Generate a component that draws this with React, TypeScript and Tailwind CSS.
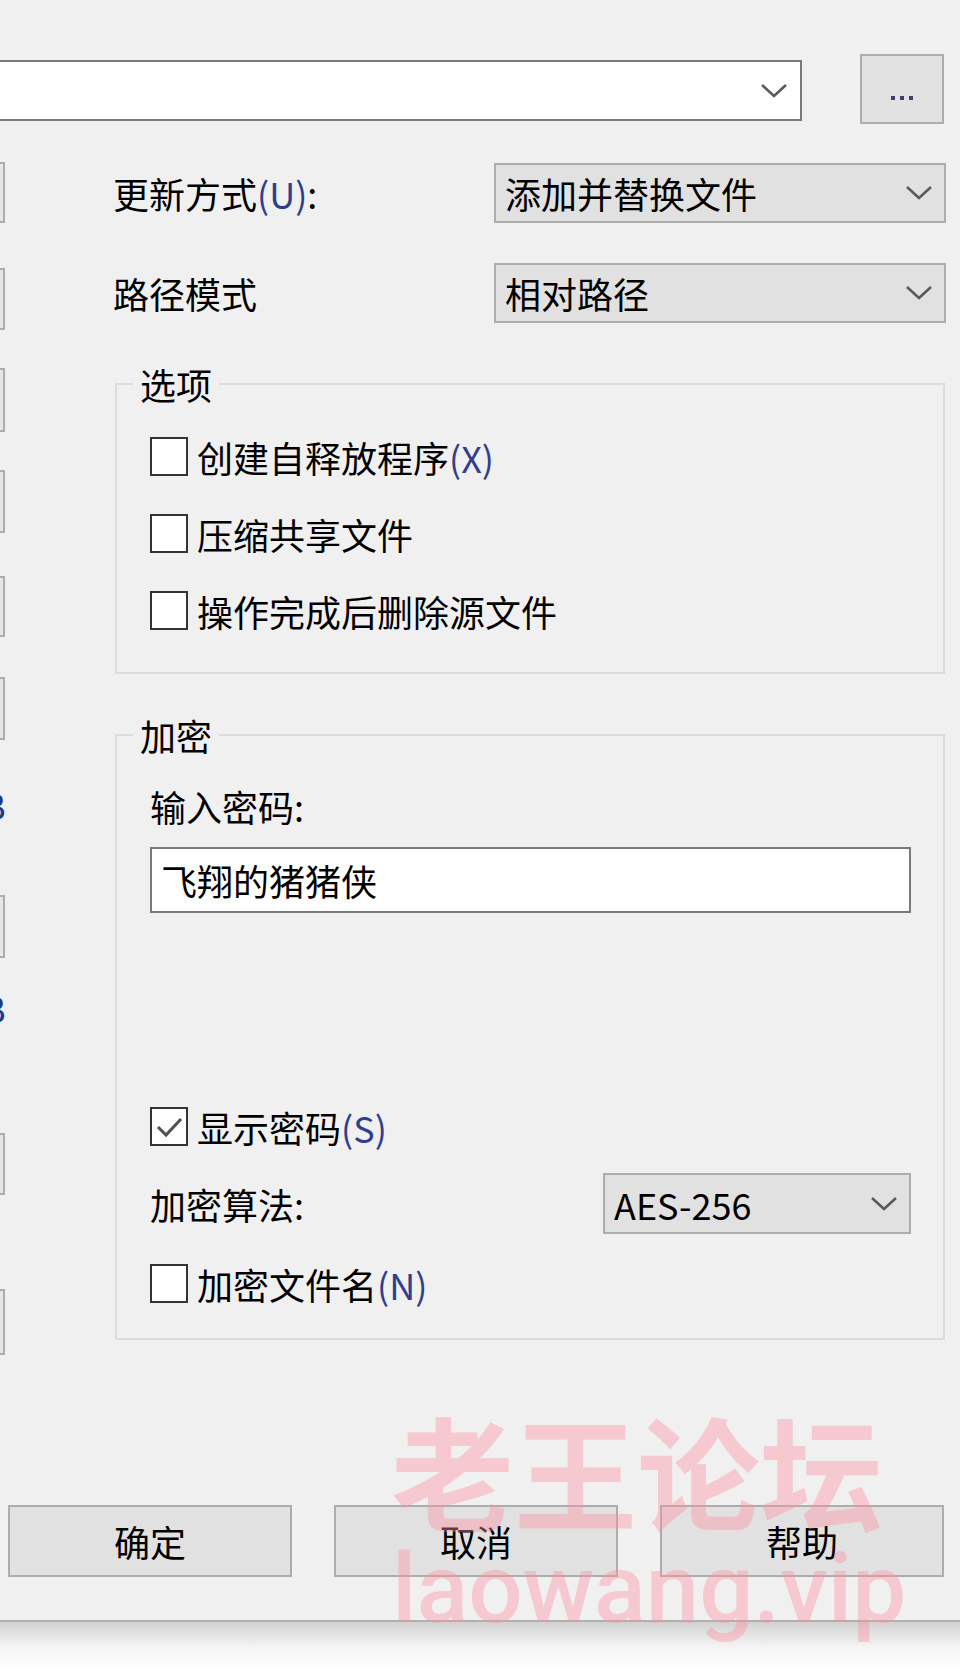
import type { ReactNode } from 'react';

const cjk = "font-['Noto_Sans_CJK_SC','Noto_Sans',sans-serif]";

const Chevron = () => (
    <svg width="28" height="16" viewBox="0 0 28 16" className="shrink-0">
        <polyline points="2,2 14,13 26,2" fill="none" stroke="#5a5a5a" strokeWidth="2.6"/>
    </svg>
);

const Key = ({ k }: { k: string }) => (
    <span className="text-[#2f3f8c]">({k})</span>
);

const Dropdown = ({ text, width, height }: { text: string; width: string; height: string }) => (
    <div className={`${width} ${height} bg-[#e1e1e1] border-2 border-[#adadad] flex items-center justify-between pl-[9px] pr-[11px]`}>
        <span className="text-[36px] leading-none text-black">{text}</span>
        <Chevron/>
    </div>
);

const CheckRow = ({ checked, children }: { checked?: boolean; children: ReactNode }) => (
    <div className="flex items-center h-[39px]">
        <div className="w-[38px] h-[39px] bg-white border-2 border-[#333333] flex items-center justify-center">
            {checked && (
                <svg width="30" height="30" viewBox="0 0 30 30">
                    <polyline points="4,15 12,23 27,7" fill="none" stroke="#505050" strokeWidth="3"/>
                </svg>
            )}
        </div>
        <span className="ml-[9px] text-[36px] leading-none text-black">{children}</span>
    </div>
);

const Stub = ({ mt, h }: { mt: string; h: string }) => (
    <div className={`${mt} ${h} w-[5px] bg-[#e6e6e6] border-2 border-l-0 border-[#adadad]`}/>
);

const Cut = ({ mt }: { mt: string }) => (
    <div className={`${mt} h-[36px] w-[5px] overflow-hidden`}>
        <span className="block -ml-[18px] text-[36px] leading-none text-[#1d3a8f] font-['Liberation_Sans',sans-serif]">B</span>
    </div>
);

export default function App() {
    return (
        <div className={`relative w-[960px] h-[1672px] bg-white overflow-hidden flex flex-col ${cjk}`}>
            <div className="h-[1622px] bg-[#f0f0f0] border-b-2 border-[#b0b0b0] flex flex-col">
                {/* top path row */}
                <div className="pt-[54px] flex items-start">
                    <div className="mt-[6px] w-[802px] h-[61px] bg-white border-2 border-l-0 border-[#7a7a7a] flex items-center justify-end pr-[12px]">
                        <Chevron/>
                    </div>
                    <button className="ml-[58px] w-[84px] h-[70px] bg-[#e1e1e1] border-2 border-[#adadad] flex items-end justify-center pb-[22px] gap-[5px]">
                        <span className="w-[4px] h-[4px] bg-[#4a3a6a]"/>
                        <span className="w-[4px] h-[4px] bg-[#4a3a6a]"/>
                        <span className="w-[4px] h-[4px] bg-[#4a3a6a]"/>
                    </button>
                </div>

                <div className="flex items-start">
                    {/* cut-off controls on the left edge */}
                    <div className="w-[5px] flex flex-col">
                        <Stub mt="mt-[38px]" h="h-[61px]"/>
                        <Stub mt="mt-[45px]" h="h-[62px]"/>
                        <Stub mt="mt-[38px]" h="h-[64px]"/>
                        <Stub mt="mt-[38px]" h="h-[63px]"/>
                        <Stub mt="mt-[43px]" h="h-[61px]"/>
                        <Stub mt="mt-[40px]" h="h-[63px]"/>
                        <Cut mt="mt-[50px]"/>
                        <Stub mt="mt-[69px]" h="h-[63px]"/>
                        <Cut mt="mt-[35px]"/>
                        <Stub mt="mt-[104px]" h="h-[62px]"/>
                        <Stub mt="mt-[94px]" h="h-[66px]"/>
                    </div>

                    <div className="ml-[108px] w-[833px] flex flex-col">
                        <div className="mt-[39px] flex items-center justify-between">
                            <span className="text-[36px] leading-none text-black">更新方式<Key k="U"/>:</span>
                            <Dropdown text="添加并替换文件" width="w-[452px]" height="h-[60px]"/>
                        </div>
                        <div className="mt-[40px] flex items-center justify-between">
                            <span className="text-[36px] leading-none text-black">路径模式</span>
                            <Dropdown text="相对路径" width="w-[452px]" height="h-[60px]"/>
                        </div>

                        {/* 选项 */}
                        <fieldset className="mt-[43px] ml-[2px] w-[830px] border-2 border-[#dcdcdc] pl-[33px] pb-[42px]">
                            <legend className="ml-[-17px] px-[7px] text-[36px] leading-none text-black">选项</legend>
                            <div className="mt-[35px] flex flex-col gap-[38px]">
                                <CheckRow>创建自释放程序<Key k="X"/></CheckRow>
                                <CheckRow>压缩共享文件</CheckRow>
                                <CheckRow>操作完成后删除源文件</CheckRow>
                            </div>
                        </fieldset>

                        {/* 加密 */}
                        <fieldset className="mt-[43px] ml-[2px] w-[830px] border-2 border-[#dcdcdc] pl-[33px] pb-[35px]">
                            <legend className="ml-[-17px] px-[7px] text-[36px] leading-none text-black">加密</legend>
                            <div className="mt-[35px] text-[36px] leading-none text-black">输入密码:</div>
                            <div className="mt-[23px] w-[761px] h-[66px] bg-white border-2 border-[#7a7a7a] flex items-center pl-[9px]">
                                <span className="text-[36px] leading-none text-black">飞翔的猪猪侠</span>
                            </div>
                            <div className="mt-[194px]">
                                <CheckRow checked>显示密码<Key k="S"/></CheckRow>
                            </div>
                            <div className="mt-[27px] w-[761px] flex items-center justify-between">
                                <span className="text-[36px] leading-none text-black">加密算法:</span>
                                <Dropdown text="AES-256" width="w-[308px]" height="h-[61px]"/>
                            </div>
                            <div className="mt-[30px]">
                                <CheckRow>加密文件名<Key k="N"/></CheckRow>
                            </div>
                        </fieldset>
                    </div>
                </div>

                {/* buttons */}
                <div className="mt-[150px] pl-[8px] flex gap-[42px]">
                    {['确定', '取消', '帮助'].map((t) => (
                        <button key={t} className="w-[284px] h-[72px] bg-[#e1e1e1] border-2 border-[#adadad] flex items-center justify-center text-[36px] leading-none text-black">
                            {t}
                        </button>
                    ))}
                </div>
            </div>
            <div className="h-[50px] bg-linear-to-b from-[#d2d2d2] via-[#f4f4f4] to-white"/>

            {/* watermark */}
            <div className="absolute left-[391px] top-[1407px] pointer-events-none text-[123px] leading-none font-bold text-[#ff8ca0]/40">老王论坛</div>
            <div className="absolute left-[392px] top-[1541px] pointer-events-none text-[96px] leading-none font-medium text-[#ff8ca0]/40 font-['Roboto',sans-serif]">laowang.vip</div>
        </div>
    );
}
